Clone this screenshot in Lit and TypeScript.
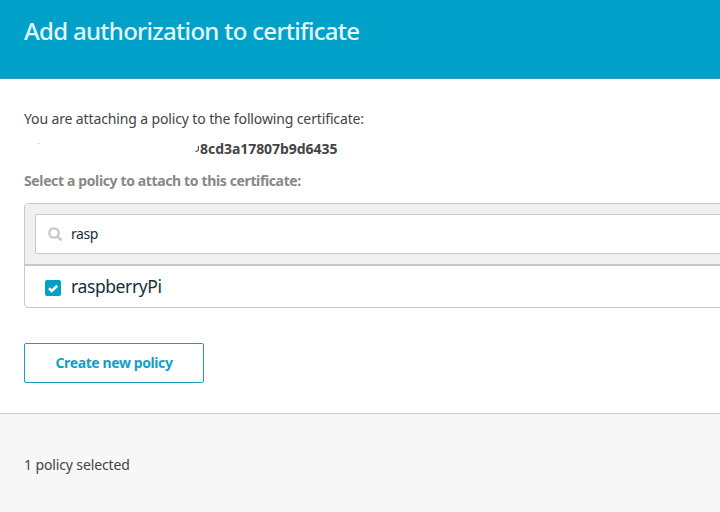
import { LitElement, html, css } from "lit";
import { customElement } from "lit/decorators.js";

@customElement("app-root")
export class AppRoot extends LitElement {
  static styles = css`
    :host { display: flex; flex-direction: column; height: 512px; overflow: hidden; background: #fff; color: #444; font: 14px/20px "Noto Sans", sans-serif; white-space: nowrap; }
    * { box-sizing: border-box; }
    h1, p { margin: 0; }
    header { flex: none; height: 79px; padding: 15px 24px; background: #00a1c9; border-bottom: 1px solid #2a9dbb; color: #e4f8fd; }
    h1 { font-size: 24px; line-height: 32px; font-weight: 500; letter-spacing: -0.7px; }
    main { flex: none; height: 334px; padding: 30px 0 0 24px; display: flex; flex-direction: column; align-items: flex-start; }
    .intro { letter-spacing: -0.13px; }
    .cert { display: flex; width: 400px; height: 20px; margin-top: 10px; font-weight: 700; }
    .hash { margin-left: 1px; letter-spacing: -0.05px; }
    .speck { width: 3px; height: 1px; margin: 4px 0 0 13px; background: #ddd; }
    .cut { width: 4px; height: 7px; margin: 7px 0 0 155px; }
    .label { margin-top: 12px; font-weight: 700; color: #888; letter-spacing: -0.37px; }
    .panel { width: 720px; height: 105px; margin-top: 12px; border: 1px solid #c8c8c8; border-radius: 4px; overflow: hidden; }
    .filter { height: 62px; padding: 10px; background: #f0f0f0; border-bottom: 2px solid #c8c8c8; }
    .search { display: flex; align-items: center; height: 40px; padding-left: 12px; background: #fff; border: 1px solid #c8c8c8; border-radius: 2px; color: #16303b; }
    .search svg { width: 14px; height: 14px; margin-right: 9px; }
    .query { letter-spacing: -0.4px; }
    .row { display: flex; align-items: center; height: 41px; padding-left: 20px; color: #16303b; }
    .box { display: flex; width: 16px; height: 16px; margin: 3px 10px 0 0; background: #00a1c9; border-radius: 2px; }
    .name { font-size: 17.5px; line-height: 24px; margin-top: -2px; letter-spacing: -0.4px; }
    .create { width: 180px; height: 40px; margin-top: 35px; padding: 0; border: 1px solid #1b9dbd; border-radius: 2px; background: #fff; color: #139fc6; font: 700 14px/20px "Noto Sans", sans-serif; letter-spacing: -0.4px; }
    footer { flex: 1; padding: 41px 24px 0; border-top: 1px solid #c8c8c8; background: #f7f7f7; letter-spacing: -0.12px; }
  `;

  render() {
    return html`
      <header><h1>Add authorization to certificate</h1></header>
      <main>
        <p class="intro">You are attaching a policy to the following certificate:</p>
        <div class="cert">
          <span class="speck"></span>
          <svg class="cut" viewBox="0 0 4 7"><path d="M3.5 0V3.5Q3 5.5.5 5.7" fill="none" stroke="#555" stroke-width="1.3"/></svg>
          <span class="hash">8cd3a17807b9d6435</span>
        </div>
        <p class="label">Select a policy to attach to this certificate:</p>
        <div class="panel">
          <div class="filter">
            <div class="search">
              <svg viewBox="0 0 14 14" fill="none" stroke="#c8c8c8" stroke-width="2.3"><circle cx="6" cy="6" r="4.7"/><path d="M9.5 9.5 12.7 12.7" stroke-width="2.6" stroke-linecap="round"/></svg>
              <span class="query">rasp</span>
            </div>
          </div>
          <div class="row">
            <span class="box"><svg width="16" height="16" viewBox="0 0 16 16"><path d="M4 8.3 6.8 11 12.2 5.7" fill="none" stroke="#fff" stroke-width="2.6"/></svg></span>
            <span class="name">raspberryPi</span>
          </div>
        </div>
        <button class="create">Create new policy</button>
      </main>
      <footer><span class="count">1 policy selected</span></footer>
    `;
  }
}
